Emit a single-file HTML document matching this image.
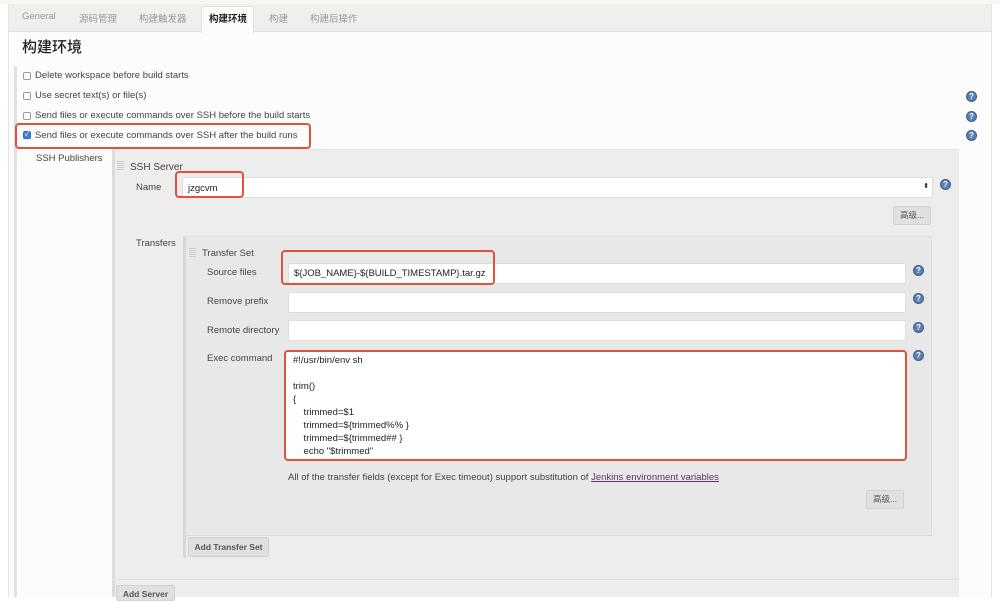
<!DOCTYPE html>
<html><head><meta charset="utf-8">
<style>
*{box-sizing:border-box;margin:0;padding:0}
body{width:1000px;height:597px;overflow:hidden;background:#fff;font-family:"Liberation Sans","Noto Sans CJK SC",sans-serif;font-size:9.5px;color:#333;position:relative}
.a{position:absolute}
.tab{position:absolute;top:11px;font-size:9.5px;color:#999}
.cb{position:absolute;width:8px;height:8px;border:1px solid #999;border-radius:2px;background:#fff}
.help{position:absolute;width:11px;height:11px;border-radius:50%;background:#5a7fb0;border:1px solid #3d5f8e;color:#fff;font-size:8px;font-weight:bold;line-height:9px;text-align:center}
.inp{position:absolute;background:#fff;border:1px solid #ddd;border-radius:2px;height:21px;padding:4px 5px;font-size:9.5px;color:#222}
.red{position:absolute;border:2px solid #e0523f;border-radius:4px}
.btn{position:absolute;background:#e0e0e0;border:1px solid #d2d2d2;border-radius:2px;font-size:8.5px;color:#555;text-align:center}
.lbl{position:absolute;font-size:9.5px;color:#444}
</style></head><body>
<div class="a" style="left:0;top:0;width:1000px;height:4px;background:#f7f7f2"></div>
<div class="a" style="left:8px;top:4px;width:984px;height:593px;background:#fcfcfc;border-left:1px solid #e5e5e5;border-right:1px solid #e5e5e5"></div>
<div class="a" style="left:9px;top:4px;width:982px;height:28px;background:#efefef;border-bottom:1px solid #e2e2e2"></div>
<span class="tab" style="left:22px">General</span>
<span class="tab" style="left:79px">源码管理</span>
<span class="tab" style="left:139px">构建触发器</span>
<div class="a" style="left:201px;top:6px;width:53px;height:27px;background:#fcfcfc;border:1px solid #e2e2e2;border-bottom:none;border-radius:3px 3px 0 0"></div>
<span class="tab" style="left:209px;color:#222;font-weight:bold">构建环境</span>
<span class="tab" style="left:269px">构建</span>
<span class="tab" style="left:310px">构建后操作</span>
<div class="a" style="left:22px;top:36px;font-size:15px;color:#222;font-weight:500">构建环境</div>
<div class="a" style="left:14px;top:66px;width:3px;height:531px;background:#e2e2e2"></div>

<div class="cb" style="left:23px;top:72px"></div><span class="lbl" style="left:35px;top:70px">Delete workspace before build starts</span>
<div class="cb" style="left:23px;top:92px"></div><span class="lbl" style="left:35px;top:90px">Use secret text(s) or file(s)</span>
<div class="cb" style="left:23px;top:112px"></div><span class="lbl" style="left:35px;top:110px">Send files or execute commands over SSH before the build starts</span>
<div class="cb" style="left:23px;top:131px;background:#3c7fd6;border-color:#2f6bbd;color:#fff;font-size:7px;line-height:6px;text-align:center">✓</div><span class="lbl" style="left:35px;top:130px">Send files or execute commands over SSH after the build runs</span>
<div class="red" style="left:15px;top:123px;width:296px;height:26px"></div>
<div class="help" style="left:966px;top:91px">?</div>
<div class="help" style="left:966px;top:111px">?</div>
<div class="help" style="left:966px;top:130px">?</div>

<span class="lbl" style="left:36px;top:153px">SSH Publishers</span>
<div class="a" style="left:112px;top:149px;width:847px;height:448px;background:#ededed;border-left:3px solid #dcdcdc;border-top:1px solid #e3e3e3"></div>
<div class="a" style="left:117px;top:161px;width:7px;height:10px;background:repeating-linear-gradient(#ccc 0 1px,transparent 1px 2px)"></div>
<span class="lbl" style="left:130px;top:162px;font-size:10px">SSH Server</span>
<span class="lbl" style="left:136px;top:182px">Name</span>
<div class="inp" style="left:182px;top:177px;width:751px;height:21px;padding-top:5px">jzgcvm<span style="position:absolute;right:3px;top:4px;font-size:7px">⬍</span></div>
<div class="red" style="left:175px;top:171px;width:69px;height:27px"></div>
<div class="help" style="left:940px;top:179px">?</div>
<div class="btn" style="left:893px;top:206px;width:38px;height:19px;line-height:17px">高级...</div>
<div class="a" style="left:113px;top:579px;width:846px;height:1px;background:#e0e0e0"></div>

<span class="lbl" style="left:136px;top:238px">Transfers</span>
<div class="a" style="left:183px;top:236px;width:749px;height:300px;background:#e8e8e8;border-left:3px solid #d8d8d8;border-top:1px solid #e0e0e0;border-right:1px solid #dedede;border-bottom:1px solid #dadada"></div>
<div class="a" style="left:183px;top:536px;width:3px;height:22px;background:#d8d8d8"></div>
<div class="a" style="left:189px;top:248px;width:7px;height:10px;background:repeating-linear-gradient(#ccc 0 1px,transparent 1px 2px)"></div>
<span class="lbl" style="left:202px;top:248px">Transfer Set</span>
<span class="lbl" style="left:207px;top:267px">Source files</span>
<div class="inp" style="left:288px;top:263px;width:618px">${JOB_NAME}-${BUILD_TIMESTAMP}.tar.gz</div>
<div class="red" style="left:281px;top:250px;width:214px;height:35px"></div>
<span class="lbl" style="left:207px;top:296px">Remove prefix</span>
<div class="inp" style="left:288px;top:292px;width:618px"></div>
<span class="lbl" style="left:207px;top:325px">Remote directory</span>
<div class="inp" style="left:288px;top:320px;width:618px"></div>
<span class="lbl" style="left:207px;top:353px">Exec command</span>
<div class="a" style="left:284px;top:350px;width:623px;height:111px;background:#fff;border:2px solid #e0523f;border-radius:4px;padding:2px 0 0 7px;font-size:9.5px;line-height:13px;color:#222;white-space:pre;overflow:hidden">#!/usr/bin/env sh

trim()
{
    trimmed=$1
    trimmed=${trimmed%% }
    trimmed=${trimmed## }
    echo "$trimmed"</div>
<div class="help" style="left:913px;top:265px">?</div>
<div class="help" style="left:913px;top:293px">?</div>
<div class="help" style="left:913px;top:322px">?</div>
<div class="help" style="left:913px;top:350px">?</div>
<span class="lbl" style="left:288px;top:472px">All of the transfer fields (except for Exec timeout) support substitution of <span style="color:#5c3566;text-decoration:underline">Jenkins environment variables</span></span>
<div class="btn" style="left:866px;top:490px;width:38px;height:19px;line-height:17px">高级...</div>
<div class="btn" style="left:188px;top:537px;width:81px;height:20px;line-height:18px;font-weight:bold">Add Transfer Set</div>
<div class="btn" style="left:116px;top:585px;width:59px;height:16px;line-height:16px;font-weight:bold">Add Server</div>
</body></html>
